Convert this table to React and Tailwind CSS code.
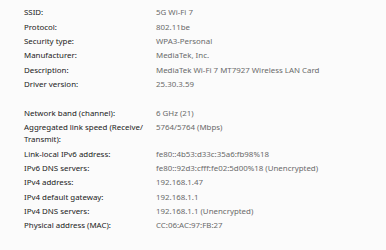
import React from 'react'

const rowsTop = [
  ['SSID:', '5G Wi-Fi 7'],
  ['Protocol:', '802.11be'],
  ['Security type:', 'WPA3-Personal'],
  ['Manufacturer:', 'MediaTek, Inc.'],
  ['Description:', 'MediaTek Wi-Fi 7 MT7927 Wireless LAN Card'],
  ['Driver version:', '25.30.3.59'],
]

const rowsBottom = [
  ['Network band (channel):', '6 GHz (21)'],
  ['Aggregated link speed (Receive/ Transmit):', '5764/5764 (Mbps)'],
  ['Link-local IPv6 address:', 'fe80::4b53:d33c:35a6:fb98%18'],
  ['IPv6 DNS servers:', 'fe80::92d3:cfff:fe02:5d00%18 (Unencrypted)'],
  ['IPv4 address:', '192.168.1.47'],
  ['IPv4 default gateway:', '192.168.1.1'],
  ['IPv4 DNS servers:', '192.168.1.1 (Unencrypted)'],
  ['Physical address (MAC):', 'CC:06:AC:97:FB:27'],
]

const Row = ({ label, value }) => (
  <div className="grid grid-cols-[132px_1fr] py-[1.2px]">
    <div className="text-[#1a1a1a] pr-2">{label}</div>
    <div className="text-[#6a6a6a] whitespace-nowrap">{value}</div>
  </div>
)

export default function App() {
  return (
    <div className="w-[386px] h-[250px] bg-[#fbfbfb] pl-6 pt-[5px] text-[7.9px] leading-[12px] overflow-hidden font-['Noto_Sans',sans-serif]">
      <div className="flex flex-col">
        {rowsTop.map(([l, v]) => (
          <Row key={l} label={l} value={v} />
        ))}
      </div>
      <div className="flex flex-col mt-[14.4px]">
        {rowsBottom.map(([l, v]) => (
          <Row key={l} label={l} value={v} />
        ))}
      </div>
    </div>
  )
}
